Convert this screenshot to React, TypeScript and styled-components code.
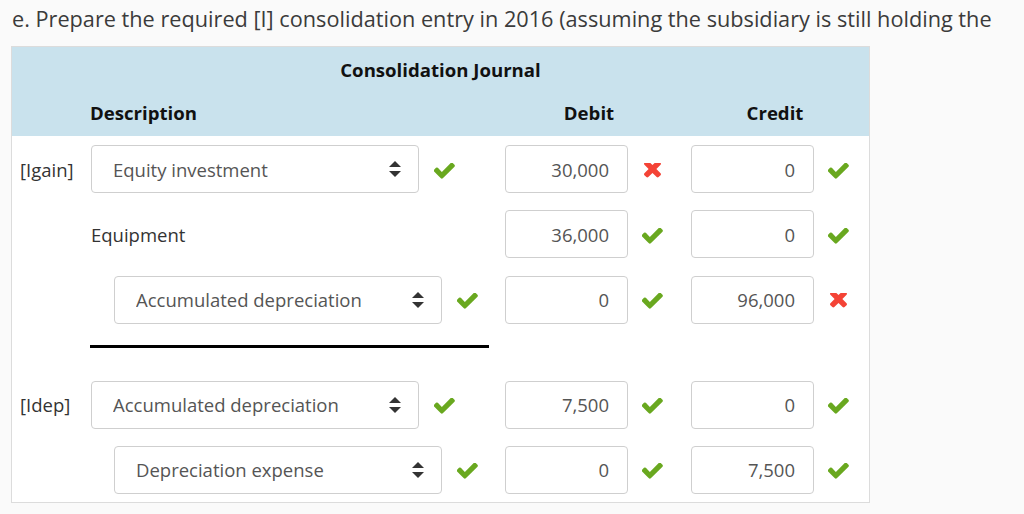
import React from "react";
import styled, { createGlobalStyle } from "styled-components";

const Global = createGlobalStyle`
  html, body { margin: 0; padding: 0; background: #fafafa; }
  body { font-family: "Open Sans", "Noto Sans", sans-serif; color: #333; }
`;

const Page = styled.div`
  padding: 4px 0 0 11px;
  width: 1013px;
`;

const Title = styled.p`
  margin: 0 0 12px 1px;
  font-size: 21.7px;
  line-height: 30px;
  color: #3b3b3b;
  white-space: nowrap;
`;

const Table = styled.div`
  width: 857px;
  border: 1px solid #dcdcdc;
  background: #fff;
`;

const Header = styled.div`
  background: #c9e2ed;
  height: 89px;
  display: grid;
  grid-template-columns: 78px 415px 186px 178px;
  grid-template-rows: 46px 43px;
  font-weight: 700;
  font-size: 18.6px;
  color: #111;
`;

const Caption = styled.div`
  grid-column: 1 / -1;
  text-align: center;
  padding: 10px 0 0 0;
  line-height: 26px;
`;

const HeadCell = styled.div<{ $center?: boolean }>`
  grid-row: 2;
  line-height: 26px;
  padding-top: 7px;
  width: ${(p) => (p.$center ? "168px" : "auto")};
  text-align: ${(p) => (p.$center ? "center" : "left")};
`;

const Body = styled.div`
  display: flex;
  flex-direction: column;
  gap: 17.4px;
  padding: 9px 0 8px;
`;

const Row = styled.div`
  display: grid;
  grid-template-columns: 78px 415px 186px 178px;
  height: 48px;
  align-items: center;
`;

const Label = styled.div`
  padding-left: 8px;
  font-size: 18.5px;
  color: #333;
`;

const Desc = styled.div<{ $indent?: boolean }>`
  display: flex;
  align-items: center;
  gap: 14px;
  padding-left: ${(p) => (p.$indent ? "24px" : "1px")};
`;

const PlainText = styled.div`
  font-size: 18.5px;
  color: #333;
`;

const SelectWrap = styled.div`
  position: relative;
  width: 328px;
  height: 48px;
`;

const Select = styled.select`
  appearance: none;
  -webkit-appearance: none;
  width: 100%;
  height: 100%;
  box-sizing: border-box;
  border: 1px solid #cfcfcf;
  border-radius: 4px;
  background: #fff;
  font-family: "Open Sans", "Noto Sans", sans-serif;
  font-size: 18.5px;
  color: #555;
  padding: 0 40px 0 21px;
  outline: none;
`;

const Arrow = styled.svg`
  position: absolute;
  right: 18px;
  top: 16px;
  width: 12px;
  height: 16px;
  pointer-events: none;
`;

const Amount = styled.div`
  display: flex;
  align-items: center;
  gap: 13px;
`;

const NumInput = styled.input`
  width: 123px;
  height: 48px;
  box-sizing: border-box;
  border: 1px solid #cfcfcf;
  border-radius: 4px;
  background: #fff;
  font-family: "Open Sans", "Noto Sans", sans-serif;
  font-size: 18.5px;
  color: #555;
  text-align: right;
  padding: 0 18px 0 8px;
  outline: none;
`;

const Mark = styled.span`
  display: inline-flex;
  width: 22px;
  justify-content: center;
  margin-top: 4px;
`;

const Separator = styled.div`
  height: 22px;
  padding: 3.5px 0 0 78px;
  box-sizing: border-box;
`;

const Rule = styled.div`
  width: 399px;
  height: 3px;
  background: #000;
`;

const Check = () => (
  <Mark>
    <svg width="21" height="17" viewBox="140 400 1540 1180">
      <path
        fill="#69a81f"
        d="M1671 566q0 40-28 68l-724 724-136 136q-28 28-68 28t-68-28l-136-136-362-362q-28-28-28-68t28-68l136-136q28-28 68-28t68 28l294 295 656-657q28-28 68-28t68 28l136 136q28 28 28 68z"
      />
    </svg>
  </Mark>
);

const Cross = () => (
  <Mark>
    <svg width="17" height="17" viewBox="110 540 1190 1190">
      <path
        fill="#f44336"
        d="M1298 1322q0 40-28 68l-136 136q-28 28-68 28t-68-28l-294-294-294 294q-28 28-68 28t-68-28l-136-136q-28-28-28-68t28-68l294-294-294-294q-28-28-28-68t28-68l136-136q28-28 68-28t68 28l294 294 294-294q28-28 68-28t68 28l136 136q28 28 28 68t-28 68l-294 294 294 294q28 28 28 68z"
      />
    </svg>
  </Mark>
);

const Status = ({ ok }: { ok: boolean }) => (ok ? <Check /> : <Cross />);

const Dropdown = ({ value }: { value: string }) => (
  <SelectWrap>
    <Select value={value} onChange={() => {}}>
      <option>{value}</option>
    </Select>
    <Arrow viewBox="0 0 12 16">
      <polygon points="6,0 12,6 0,6" fill="#333" />
      <polygon points="0,10 12,10 6,16" fill="#333" />
    </Arrow>
  </SelectWrap>
);

type Entry = {
  label?: string;
  account: string;
  select: boolean;
  indent?: boolean;
  debit: string;
  debitOk: boolean;
  credit: string;
  creditOk: boolean;
};

const group1: Entry[] = [
  { label: "[Igain]", account: "Equity investment", select: true, debit: "30,000", debitOk: false, credit: "0", creditOk: true },
  { account: "Equipment", select: false, debit: "36,000", debitOk: true, credit: "0", creditOk: true },
  { account: "Accumulated depreciation", select: true, indent: true, debit: "0", debitOk: true, credit: "96,000", creditOk: false },
];

const group2: Entry[] = [
  { label: "[Idep]", account: "Accumulated depreciation", select: true, debit: "7,500", debitOk: true, credit: "0", creditOk: true },
  { account: "Depreciation expense", select: true, indent: true, debit: "0", debitOk: true, credit: "7,500", creditOk: true },
];

const EntryRow = ({ e }: { e: Entry }) => (
  <Row>
    <Label>{e.label ?? ""}</Label>
    <Desc $indent={e.indent}>
      {e.select ? (
        <>
          <Dropdown value={e.account} />
          <Check />
        </>
      ) : (
        <PlainText>{e.account}</PlainText>
      )}
    </Desc>
    <Amount>
      <NumInput readOnly value={e.debit} />
      <Status ok={e.debitOk} />
    </Amount>
    <Amount>
      <NumInput readOnly value={e.credit} />
      <Status ok={e.creditOk} />
    </Amount>
  </Row>
);

export default function App() {
  return (
    <Page>
      <Global />
      <Title>
        e. Prepare the required [I] consolidation entry in 2016 (assuming the subsidiary is still holding the
      </Title>
      <Table>
        <Header>
          <Caption>Consolidation Journal</Caption>
          <HeadCell />
          <HeadCell>Description</HeadCell>
          <HeadCell $center>Debit</HeadCell>
          <HeadCell $center>Credit</HeadCell>
        </Header>
        <Body>
          {group1.map((e, i) => (
            <EntryRow key={i} e={e} />
          ))}
          <Separator>
            <Rule />
          </Separator>
          {group2.map((e, i) => (
            <EntryRow key={i} e={e} />
          ))}
        </Body>
      </Table>
    </Page>
  );
}
